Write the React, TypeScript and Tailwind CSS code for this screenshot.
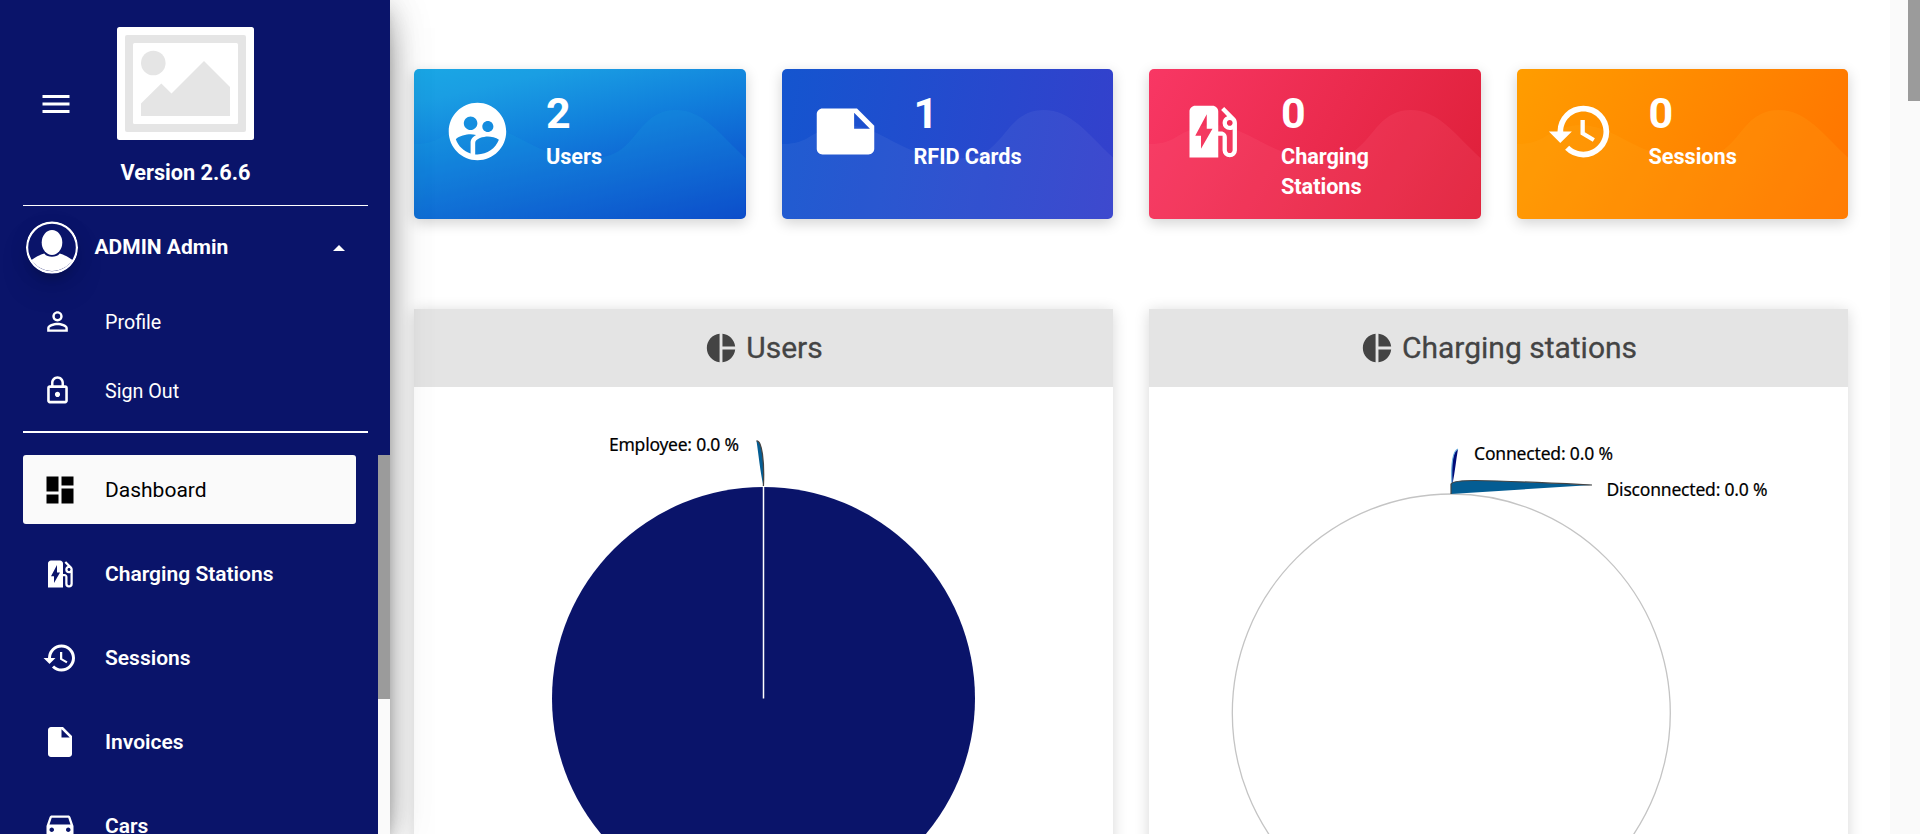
import React from "react";
import {
  MdMenu,
  MdDashboard,
  MdEvStation,
  MdHistory,
  MdInsertDriveFile,
  MdDirectionsCar,
  MdPieChart,
  MdNote,
  MdSupervisedUserCircle,
  MdPersonOutline,
  MdLockOutline,
} from "react-icons/md";

const navItems = [
  { label: "Charging Stations", Icon: MdEvStation },
  { label: "Sessions", Icon: MdHistory },
  { label: "Invoices", Icon: MdInsertDriveFile },
  { label: "Cars", Icon: MdDirectionsCar },
];

const stats = [
  { value: "2", label: "Users", Icon: MdSupervisedUserCircle, bg: "bg-[linear-gradient(167deg,#1aa7e5_0%,#1a9ee3_15%,#1180dc_42%,#0a3bc6_100%)]", wave: "#1aa0e0", strength: "0.19" },
  { value: "1", label: "RFID Cards", Icon: MdNote, bg: "bg-[linear-gradient(100deg,#1455cf_0%,#3440cc_100%)]", wave: "#ffffff", strength: "0.05" },
  { value: "0", label: "Charging Stations", Icon: MdEvStation, bg: "bg-[linear-gradient(120deg,#f83764_0%,#de1f38_100%)]", wave: "#ff6a80", strength: "0.16" },
  { value: "0", label: "Sessions", Icon: MdHistory, bg: "bg-[linear-gradient(120deg,#ff9d00_0%,#ff7200_100%)]", wave: "#ffa818", strength: "0.19" },
];

function Placeholder() {
  return (
    <svg width="137" height="113" viewBox="0 0 137 113" className="block">
      <rect width="137" height="113" rx="2.5" fill="#fff" />
      <rect x="8" y="8" width="121" height="97" rx="2" fill="#e5e5e5" />
      <rect x="16" y="16" width="105" height="81" rx="1.5" fill="#fff" />
      <circle cx="36.3" cy="36" r="12.3" fill="#e5e5e5" />
      <path d="M24 76.5 44.3 56.500 54.500 66.500 87 34l26 26v29H24z" fill="#e5e5e5" />
    </svg>
  );
}

function Avatar() {
  return (
    <svg width="52" height="53" viewBox="0 0 52 53" className="block shrink-0 rounded-full shadow-[0_16px_38px_-12px_rgba(0,0,0,0.3),0_4px_25px_0_rgba(0,0,0,0.05),0_8px_10px_-5px_rgba(0,0,0,0.2)]">
      <circle cx="26" cy="26.500" r="24.900" fill="none" stroke="#fff" strokeWidth="2.200" />
      <ellipse cx="26" cy="21.500" rx="10.300" ry="12.500" fill="#fff" />
      <path d="M5.500 39C10 35.500 14 34 18.300 32.600C21 36.700 31 36.700 33.700 32.600C38 34 42 35.500 46.500 39A24.700 24.700 0 0 1 5.500 39Z" fill="#fff" />
    </svg>
  );
}

function StatCard({ value, label, Icon, bg, wave, strength }: (typeof stats)[number]) {
  return (
    <div className={`relative flex h-[150px] overflow-hidden rounded-[5px] text-white ${bg}`}>
      <svg className="absolute inset-0 h-full w-full" viewBox="0 0 332 150" preserveAspectRatio="none">
        <path
          d="M0 75C10 75 18 73 24 70C40 60 52 56 64 56C90 56 112 76 138 84C160 91 192 93 208 80C226 66 233 41 262 41C290 41 306 65 332 89V150H0Z"
          fill={wave}
          fillOpacity={strength}
        />
      </svg>
      <div className="relative w-[132px] shrink-0 pl-[29px] pt-[28px]">
        <Icon size={69} />
      </div>
      <div className="relative w-[130px] pt-[25px] font-bold">
        <div className="text-[43px] leading-[38px]">{value}</div>
        <div className="mt-[10px] text-[21.700px] leading-[30px] tracking-[-0.05px]">{label}</div>
      </div>
    </div>
  );
}

function ChartPanel({ title, children }: { title: string; children: React.ReactNode }) {
  return (
    <section className="h-[640px] bg-white shadow-[0_2px_14px_rgba(0,0,0,0.16)]">
      <h2 className="flex h-[78px] items-center justify-center gap-[8px] bg-[#e4e4e4] text-[30px] text-[#444]">
        <MdPieChart size={34} />
        <span className="pb-[2px] [-webkit-text-stroke:0.3px_#444]">{title}</span>
      </h2>
      {children}
    </section>
  );
}

const labelClass = "font-['Noto_Sans','Open_Sans',sans-serif] text-[17.500px] [stroke:#000] [stroke-width:0.2px]";

export default function App() {
  return (
    <div className="flex h-[834px] w-full overflow-hidden bg-white font-[Roboto,sans-serif]">
      <aside className="relative z-10 flex w-[390px] shrink-0 flex-col bg-[#0a146a] text-white shadow-[0_16px_38px_-12px_rgba(0,0,0,0.56),0_4px_25px_0_rgba(0,0,0,0.12),0_8px_10px_-5px_rgba(0,0,0,0.2),0_4px_44px_rgba(0,0,0,0.12)]">
        <header className="mx-[23px] flex h-[206px] w-[345px] shrink-0 border-b border-white">
          <div className="w-[94px] pl-[14.500px] pt-[86px]">
            <MdMenu size={36} />
          </div>
          <div className="flex flex-col items-center pt-[27px]">
            <Placeholder />
            <div className="mt-[18px] text-[21.700px] font-bold leading-[30px]">Version 2.6.6</div>
          </div>
        </header>
        <div className="mx-[23px] h-[227px] w-[345px] shrink-0 border-b-2 border-white">
          <div className="flex items-center pl-[3px] pt-[15px]">
            <Avatar />
            <span className="ml-[16.500px] text-[21px] font-bold">ADMIN Admin</span>
            <svg width="12" height="6" viewBox="0 0 12 6" className="ml-auto mr-[23px]">
              <path d="M0 6 6 0l6 6z" fill="#fff" />
            </svg>
          </div>
          <div className="mt-[13px] flex h-[69px] items-center pl-[19px] text-[19.700px]">
            <MdPersonOutline size={31} />
            <span className="ml-[32px] pt-[2px]">Profile</span>
          </div>
          <div className="flex h-[69px] items-center pl-[19px] text-[19.700px]">
            <MdLockOutline size={31} />
            <span className="ml-[32px] pt-[2px]">Sign Out</span>
          </div>
        </div>
        <nav className="mt-[22px] flex min-h-0 flex-1">
          <div className="flex w-[378px] shrink-0 flex-col gap-[15px] overflow-hidden pl-[23px]">
            <a className="flex h-[69px] w-[333px] shrink-0 items-center rounded-[3px] bg-[#fafafa] pl-[19px] text-[21px] text-black">
              <MdDashboard size={36} />
              <span className="ml-[27px] pt-[2px]">Dashboard</span>
            </a>
            {navItems.map(({ label, Icon }) => (
              <a key={label} className="flex h-[69px] w-[333px] shrink-0 items-center pl-[19px] text-[21px] font-semibold">
                <Icon size={36} />
                <span className="ml-[27px] pt-[2px]">{label}</span>
              </a>
            ))}
          </div>
          <div className="w-[12px] bg-[#fafafa]">
            <div className="h-[244px] bg-[#9b9b9b]" />
          </div>
        </nav>
      </aside>

      <main className="w-[1500px] shrink-0 pl-[24px] pt-[69px]">
        <div className="grid w-[1434px] grid-cols-4 gap-x-[36px]">
          {stats.map((s) => (
            <div key={s.label + s.value} className="rounded-[5px] shadow-[0_4px_14px_rgba(0,0,0,0.18)]">
              <StatCard {...s} />
            </div>
          ))}
        </div>
        <div className="mt-[90px] grid w-[1434px] grid-cols-2 gap-x-[36px]">
          <ChartPanel title="Users">
            <svg width="699" height="562" viewBox="414 387 699 562" className="block">
              <circle cx="763.500" cy="698.500" r="211.500" fill="#0a146a" />
              <path d="M763.500 486V698.500" stroke="#fff" strokeWidth="1.500" />
              <path d="M763.400 486C760 470 758.500 454 756.500 441C762 440 764.500 462 763.400 486Z" fill="#045d93" />
              <path d="M756.500 441C762 440 764.500 462 763.400 486" fill="none" stroke="#444" strokeWidth="1.300" />
              <text x="609" y="450.500" textLength="130" className={labelClass}>Employee: 0.0 %</text>
            </svg>
          </ChartPanel>
          <ChartPanel title="Charging stations">
            <svg width="699" height="562" viewBox="1149 387 699 562" className="block">
              <circle cx="1451.300" cy="713" r="219" fill="none" stroke="#c4c4c4" strokeWidth="1.300" />
              <path d="M1452 484C1451 464 1453 451 1458 449C1456 460 1455 472 1452.500 484Z" fill="#000c78" />
              <path d="M1452 484C1451 464 1453 451 1458 449" fill="none" stroke="#69aee0" strokeWidth="1.200" />
              <path d="M1451 494V484C1453 481 1462 480.500 1475 480.500C1510 481 1550 483 1592 485Z" fill="#045d93" />
              <path d="M1451 494V484C1453 481 1462 480.500 1475 480.500C1510 481 1550 483 1592 485" fill="none" stroke="#444" strokeWidth="1.200" />
              <text x="1474" y="459.500" textLength="139" className={labelClass}>Connected: 0.0 %</text>
              <text x="1606.500" y="495.500" textLength="161" className={labelClass}>Disconnected: 0.0 %</text>
            </svg>
          </ChartPanel>
        </div>
      </main>
      <div className="flex flex-1 justify-end bg-[#fafafa]">
        <div className="h-[101px] w-[12px] bg-[#9b9b9b]" />
      </div>
    </div>
  );
}
